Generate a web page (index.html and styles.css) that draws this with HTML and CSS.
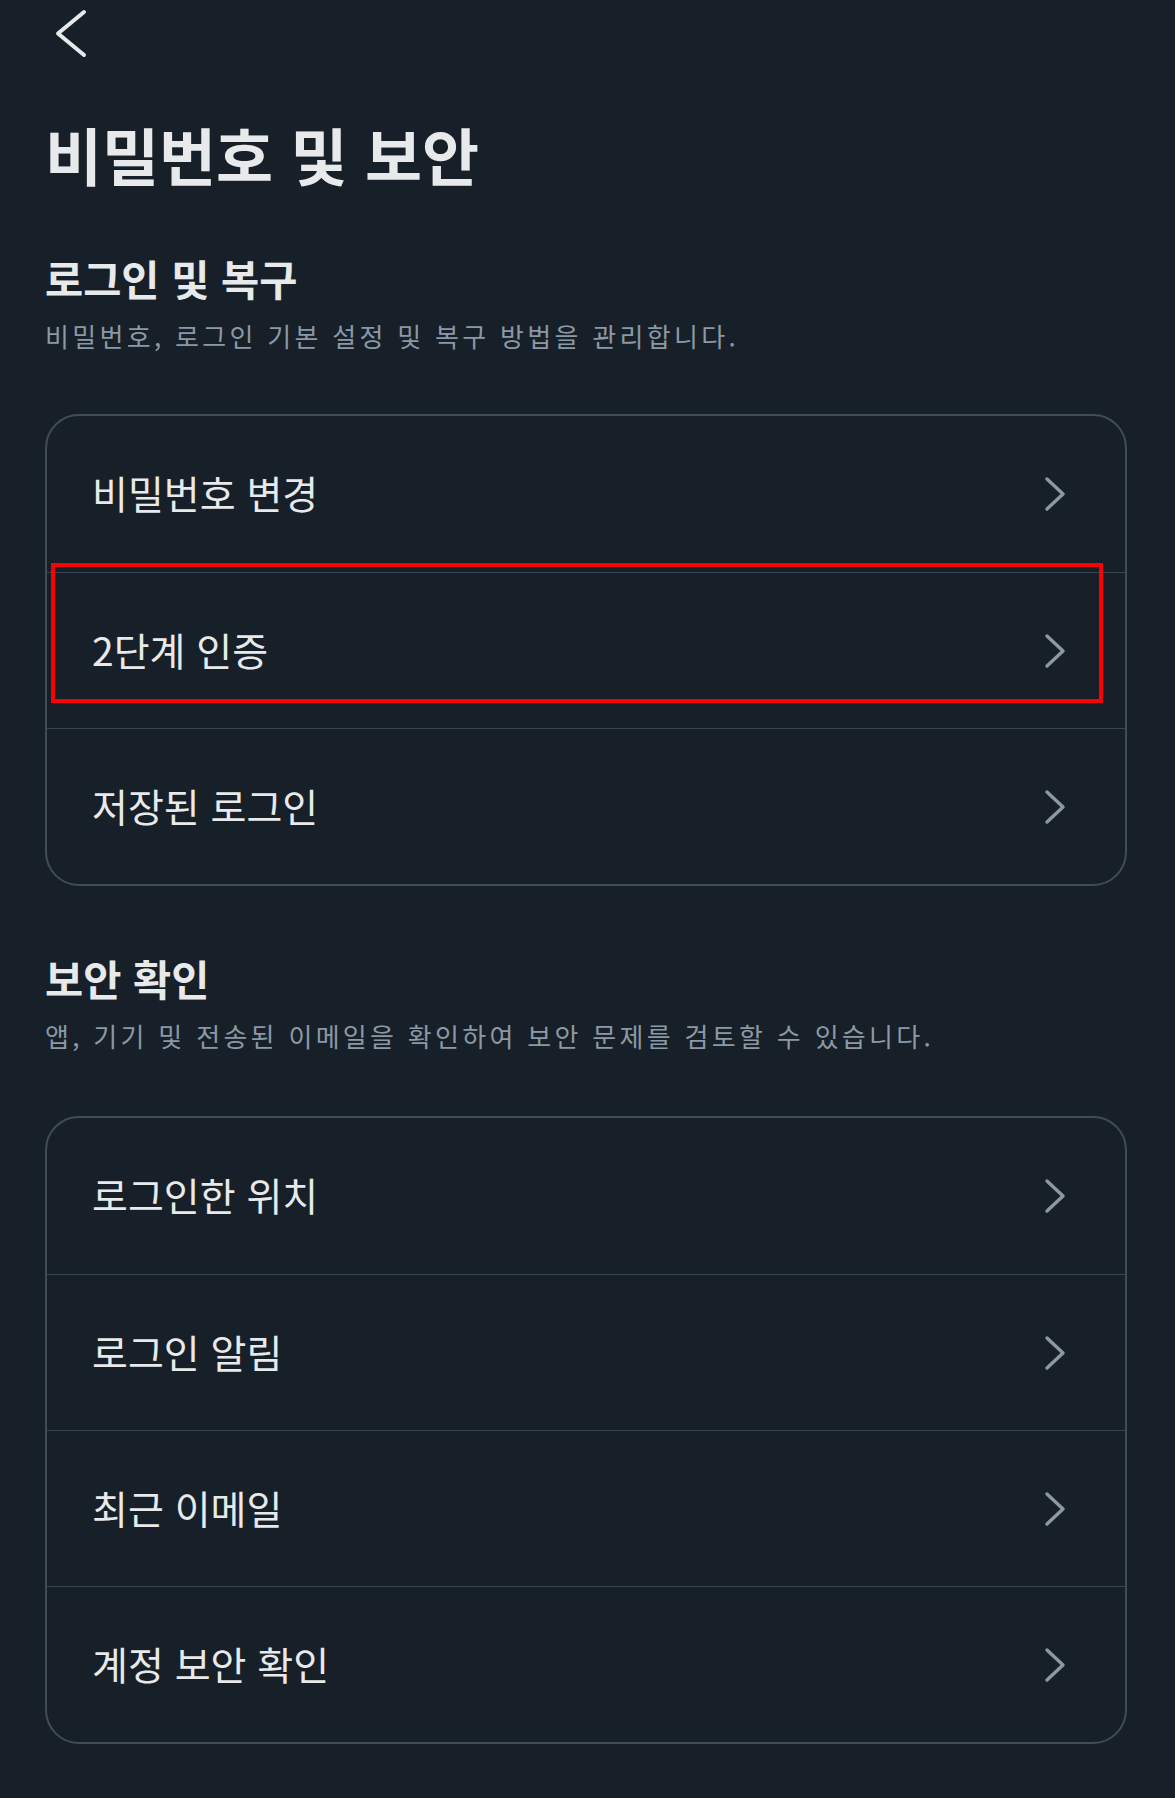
FILE: index.html
```html
<!DOCTYPE html>
<html lang="ko">
<head>
<meta charset="utf-8">
<title>비밀번호 및 보안</title>
<link rel="stylesheet" href="styles.css">
</head>
<body>
<div class="page">
  <header class="topbar">
    <button class="back" aria-label="뒤로">
      <svg width="34" height="51" viewBox="0 0 34 51"><path d="M30 4 L4 25.5 L30 47" fill="none" stroke="#e7e9ea" stroke-width="4" stroke-linecap="round" stroke-linejoin="round"/></svg>
    </button>
  </header>

  <h1 class="title">비밀번호 및 보안</h1>

  <section class="group">
    <h2 class="group-title">로그인 및 복구</h2>
    <p class="group-desc">비밀번호, 로그인 기본 설정 및 복구 방법을 관리합니다.</p>
    <ul class="card">
      <li class="row"><span class="label">비밀번호 변경</span><svg class="chev" width="26" height="36" viewBox="0 0 26 36"><path d="M4 3 L20 18 L4 33"/></svg></li>
      <li class="row row-marked"><span class="label">2단계 인증</span><svg class="chev" width="26" height="36" viewBox="0 0 26 36"><path d="M4 3 L20 18 L4 33"/></svg><span class="mark"></span></li>
      <li class="row"><span class="label">저장된 로그인</span><svg class="chev" width="26" height="36" viewBox="0 0 26 36"><path d="M4 3 L20 18 L4 33"/></svg></li>
    </ul>
  </section>

  <section class="group group-second">
    <h2 class="group-title">보안 확인</h2>
    <p class="group-desc">앱, 기기 및 전송된 이메일을 확인하여 보안 문제를 검토할 수 있습니다.</p>
    <ul class="card">
      <li class="row"><span class="label">로그인한 위치</span><svg class="chev" width="26" height="36" viewBox="0 0 26 36"><path d="M4 3 L20 18 L4 33"/></svg></li>
      <li class="row"><span class="label">로그인 알림</span><svg class="chev" width="26" height="36" viewBox="0 0 26 36"><path d="M4 3 L20 18 L4 33"/></svg></li>
      <li class="row"><span class="label">최근 이메일</span><svg class="chev" width="26" height="36" viewBox="0 0 26 36"><path d="M4 3 L20 18 L4 33"/></svg></li>
      <li class="row"><span class="label">계정 보안 확인</span><svg class="chev" width="26" height="36" viewBox="0 0 26 36"><path d="M4 3 L20 18 L4 33"/></svg></li>
    </ul>
  </section>
</div>
</body>
</html>
```

FILE: styles.css
```css
* { box-sizing: border-box; }

html, body {
  margin: 0;
  padding: 0;
  background: #172028;
}

body {
  font-family: "Noto Sans CJK KR", "Roboto", sans-serif;
  color: #e7e9ea;
  min-height: 1798px;
}

.page {
  padding: 0 48px 0 45px;
}

.topbar {
  height: 114px;
  display: flex;
  align-items: flex-start;
}

.back {
  background: none;
  border: 0;
  padding: 0;
  margin: 8px 0 0 9px;
  display: block;
  cursor: pointer;
}
.back svg { display: block; }

.title {
  margin: 0;
  font-size: 62px;
  font-weight: 700;
  line-height: 80px;
}

.group-title {
  margin: 59px 0 0;
  font-size: 41.5px;
  font-weight: 700;
  line-height: 50px;
}

.group-second .group-title {
  margin-top: 67px;
}

.group-desc {
  margin: 15px 0 0;
  font-size: 26px;
  line-height: 36px;
  letter-spacing: 3.3px;
  color: #8b98a5;
}

.card {
  list-style: none;
  margin: 60px 0 0;
  padding: 0;
  border: 2px solid #3f4d5b;
  border-radius: 34px;
}

.group-second .card {
  margin-top: 62px;
}

.row {
  position: relative;
  height: 156px;
  display: flex;
  align-items: center;
  justify-content: space-between;
  padding: 0 56px 0 45px;
}
.row + .row {
  border-top: 1px solid #394550;
}

.label {
  font-size: 39px;
  line-height: 48px;
  margin-top: -4px;
}

.chev path {
  fill: none;
  stroke: #8b98a5;
  stroke-width: 3.4;
  stroke-linecap: round;
  stroke-linejoin: round;
}

/* red highlight frame drawn over the second row */
.mark {
  position: absolute;
  left: 4px;
  right: 22px;
  top: -10px;
  height: 140px;
  border: 4px solid #ff0000;
  pointer-events: none;
}
```
